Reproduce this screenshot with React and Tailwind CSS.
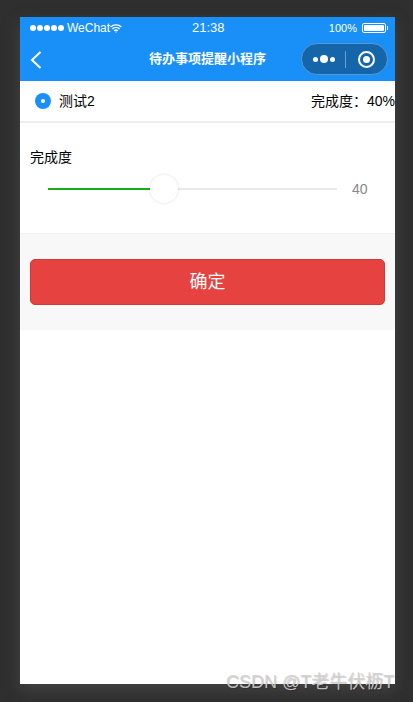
const cjk = { fontFamily: '"Liberation Sans", "Noto Sans CJK SC", sans-serif' };

function Dots() {
  return (
    <div className="flex items-center gap-px">
      {[0, 1, 2, 3, 4].map((i) => (
        <span key={i} className="w-[6px] h-[6px] rounded-full bg-white" />
      ))}
    </div>
  );
}

function Wifi() {
  return (
    <svg width="12" height="9" viewBox="0 0 12 9" fill="none" stroke="white" strokeWidth="1.4">
      <path d="M0.6 3 C3.6 0.2 8.4 0.2 11.4 3" />
      <path d="M2.4 4.9 C4.4 3.2 7.6 3.2 9.6 4.9" />
      <path d="M4.2 6.7 C5.2 5.9 6.8 5.9 7.8 6.7" />
      <circle cx="6" cy="8" r="0.7" fill="white" stroke="none" />
    </svg>
  );
}

function Battery() {
  return (
    <div className="flex items-center gap-px">
      <div className="w-[24px] h-[10px] border border-white rounded-[2px] p-px">
        <div className="h-full w-full bg-white rounded-[1px]" />
      </div>
      <div className="w-px h-[4px] bg-white" />
    </div>
  );
}

export default function App() {
  return (
    <div className="relative w-[413px] h-[702px] overflow-hidden bg-[#2f2f2f] pt-[17px] pl-[20px]" style={cjk}>
      <div className="w-[375px] h-[667px] bg-white flex flex-col shadow-[0_6px_14px_rgba(70,70,70,0.9)]">
        {/* header */}
        <div className="bg-[#1890f8] h-[64px] text-white shrink-0">
          <div className="h-[20px] pt-[2px] flex items-center justify-between pl-[10px] pr-[7px] text-[12px] relative">
            <div className="flex items-center">
              <Dots />
              <span className="ml-[3px]">WeChat</span>
              <Wifi />
            </div>
            <span className="text-[13px] absolute left-[172px]">21:38</span>
            <div className="flex items-center gap-[5px]">
              <span className="text-[11px]">100%</span>
              <Battery />
            </div>
          </div>
          <div className="h-[44px] flex items-center relative pl-[10px] pr-[7px] justify-between">
            <svg width="12" height="20" viewBox="0 0 12 20" fill="none" stroke="white" strokeWidth="2" className="mt-[1px]">
              <path d="M10.5 2 L2 10 L10.5 18" />
            </svg>
            <span className="absolute left-[129px] text-[13px] font-bold">待办事项提醒小程序</span>
            <div className="w-[87px] h-[32px] rounded-full bg-[#1565ab] border border-[#5c97cb] flex items-center">
              <div className="w-[43px] flex items-center justify-center gap-[2px]">
                <span className="w-[5px] h-[5px] rounded-full bg-white" />
                <span className="w-[8px] h-[8px] rounded-full bg-white" />
                <span className="w-[5px] h-[5px] rounded-full bg-white" />
              </div>
              <div className="w-px h-[17px] bg-[#6a9fce]" />
              <div className="flex-1 flex items-center justify-center">
                <div className="w-[17px] h-[17px] rounded-full border-2 border-white flex items-center justify-center">
                  <span className="w-[7px] h-[7px] rounded-full bg-white" />
                </div>
              </div>
            </div>
          </div>
        </div>

        {/* task row */}
        <div className="h-[42px] shrink-0 border-b-2 border-[#eeeeee] flex items-center justify-between pl-[15px] text-[14px] text-black">
          <div className="flex items-center gap-[8px]">
            <div className="w-[16px] h-[16px] rounded-full bg-[#1890f8] flex items-center justify-center">
              <span className="w-[4px] h-[4px] rounded-full bg-white" />
            </div>
            <span>测试2</span>
          </div>
          <span className="whitespace-nowrap">完成度：40%</span>
        </div>

        {/* slider section */}
        <div className="h-[111px] shrink-0 border-b border-[#f0f0f0] pl-[10px] pt-[25px] text-[14px] text-black">
          <div className="leading-[18px]">完成度</div>
          <div className="flex items-center mt-[9px] pl-[18px] h-[28px]">
            <div className="w-[289px] h-[2px] bg-[#e9e9e9] relative">
              <div className="h-full bg-[#1aad19]" style={{ width: '40%' }} />
              <div className="absolute left-[102px] top-[-13px] w-[28px] h-[28px] rounded-full bg-white shadow-[0_0_3px_rgba(0,0,0,0.15)]" />
            </div>
            <span className="ml-[15px] text-[14px] text-[#888888]">40</span>
          </div>
        </div>

        {/* button area */}
        <div className="h-[96px] shrink-0 bg-[#f8f8f8] px-[10px] pt-[25px]">
          <div className="h-[46px] rounded-[5px] bg-[#e64340] border border-[#ce3c39] text-white text-[18px] flex items-center justify-center">
            确定
          </div>
        </div>
      </div>

      <span className="absolute left-[226px] top-[671px] text-[18px] leading-[22px] whitespace-nowrap text-[#cfcfcf]/90 [text-shadow:1px_1px_1px_rgba(0,0,0,0.2)]">
        CSDN @T老牛伏枥T
      </span>
    </div>
  );
}
